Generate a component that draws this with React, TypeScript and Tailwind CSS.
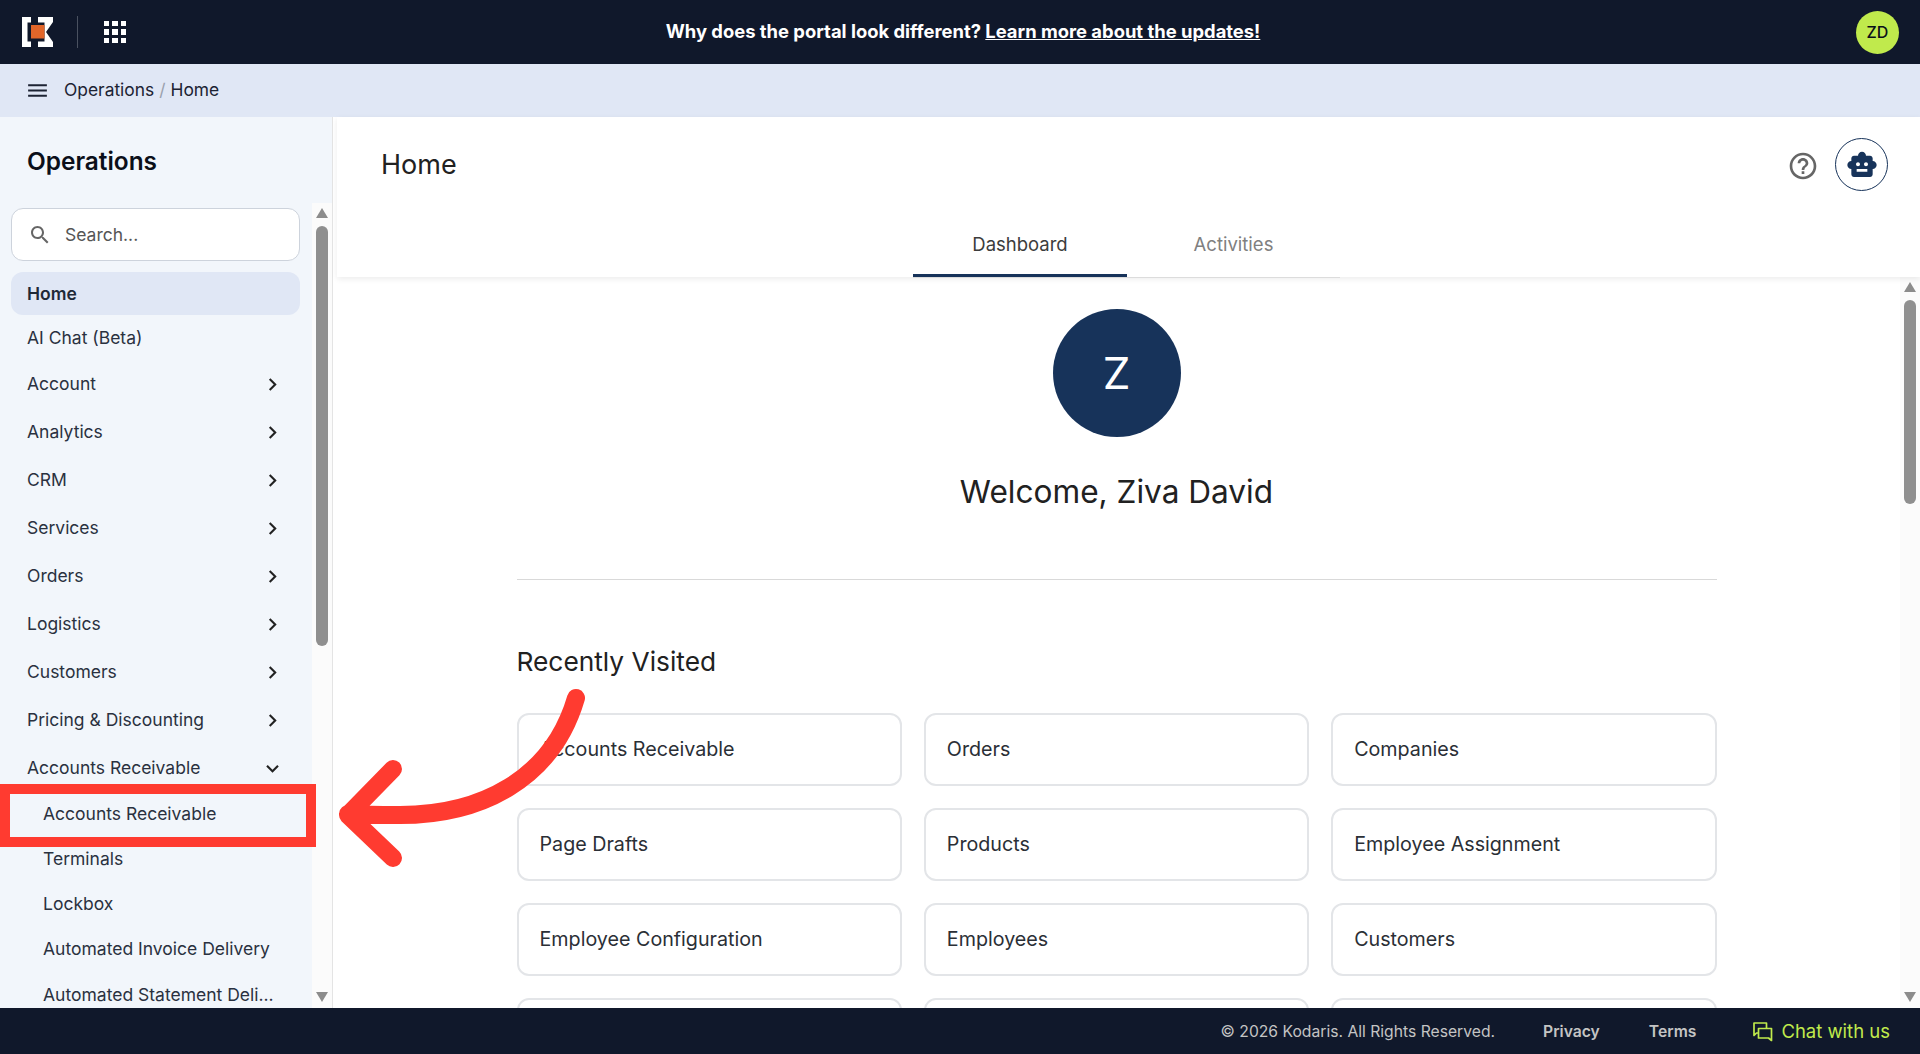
import React from "react";

const menuPath = "M3 18h18v-2H3v2zm0-5h18v-2H3v2zm0-7v2h18V6H3z";
const searchPath =
  "M15.5 14h-.79l-.28-.27C15.41 12.59 16 11.11 16 9.5 16 5.91 13.09 3 9.5 3S3 5.91 3 9.5 5.91 16 9.5 16c1.61 0 3.09-.59 4.23-1.57l.27.28v.79l5 4.99L20.49 19l-4.99-5zm-6 0C7.01 14 5 11.99 5 9.5S7.01 5 9.5 5 14 7.01 14 9.5 11.99 14 9.5 14z";
const chevronRightPath = "M10 6 8.59 7.41 13.17 12l-4.58 4.59L10 18l6-6z";
const chevronDownPath = "M16.59 8.59 12 13.17 7.41 8.59 6 10l6 6 6-6z";
const helpPath =
  "M11 18h2v-2h-2v2zm1-16C6.48 2 2 6.48 2 12s4.48 10 10 10 10-4.48 10-10S17.52 2 12 2zm0 18c-4.41 0-8-3.59-8-8s3.59-8 8-8 8 3.59 8 8-3.59 8-8 8zm0-14c-2.21 0-4 1.79-4 4h2c0-1.1.9-2 2-2s2 .9 2 2c0 2-3 1.75-3 5h2c0-2.25 3-2.5 3-5 0-2.21-1.79-4-4-4z";
const botPath =
  "M20 9V7c0-1.1-.9-2-2-2h-3c0-1.66-1.34-3-3-3S9 3.34 9 5H6c-1.1 0-2 .9-2 2v2c-1.66 0-3 1.34-3 3s1.34 3 3 3v4c0 1.1.9 2 2 2h12c1.1 0 2-.9 2-2v-4c1.66 0 3-1.34 3-3s-1.34-3-3-3zM7.5 11.5c0-.83.67-1.5 1.5-1.5s1.5.67 1.5 1.5S9.83 13 9 13s-1.5-.67-1.5-1.5zM16 17H8v-2h8v2zm-1-4c-.83 0-1.5-.67-1.5-1.5S14.17 10 15 10s1.5.67 1.5 1.5S15.83 13 15 13z";

const navItems = ["Account", "Analytics", "CRM", "Services", "Orders", "Logistics", "Customers", "Pricing & Discounting"];
const subItems = ["Accounts Receivable", "Terminals", "Lockbox", "Automated Invoice Delivery", "Automated Statement Deli..."];
const recentItems = [
  "Accounts Receivable",
  "Orders",
  "Companies",
  "Page Drafts",
  "Products",
  "Employee Assignment",
  "Employee Configuration",
  "Employees",
  "Customers",
  "",
  "",
  "",
];

function Icon({ d, className }: { d: string; className?: string }) {
  return (
    <svg viewBox="0 0 24 24" fill="currentColor" className={className}>
      <path d={d} />
    </svg>
  );
}

function Logo() {
  return (
    <svg viewBox="0 0 31 30" className="w-[31px] h-[30px]">
      <path d="M0 0H9V5.500H5.500V24.500H9V30H0Z" fill="#fff" />
      <path d="M16 0H31V5L24 15L31 25V30H16V24.500H22.500V5.500H16Z" fill="#fff" />
      <rect x="9" y="8" width="13.500" height="13.500" fill="#e2662a" />
    </svg>
  );
}

function GridIcon() {
  return (
    <div className="grid grid-cols-3 gap-[3px] w-[22px]">
      {Array.from({ length: 9 }).map((_, i) => (
        <div key={i} className="w-[5.33px] h-[5.33px] bg-white" />
      ))}
    </div>
  );
}

function ScrollBar({ thumbClass }: { thumbClass: string }) {
  return (
    <div className="w-5 shrink-0 flex flex-col items-center bg-[#fbfbfb]">
      <svg viewBox="0 0 12 10" className="w-3 h-2.5 mt-[5px] shrink-0" fill="#8c8c8c">
        <path d="M6 0 12 10H0Z" />
      </svg>
      <div className={`w-3 rounded-md bg-[#8f8f8f] shrink-0 ${thumbClass}`} />
      <svg viewBox="0 0 12 10" className="w-3 h-2.5 mt-auto mb-[6px] shrink-0" fill="#8c8c8c">
        <path d="M6 10 12 0H0Z" />
      </svg>
    </div>
  );
}

function Sidebar() {
  return (
    <aside className="w-[333px] shrink-0 flex flex-col bg-[#f2f6fb] border-r border-[#e4e4e4] overflow-hidden">
      <h2 className="h-[86px] shrink-0 pl-[27px] pt-[28px] text-[24.4px] leading-8 font-semibold text-[#0b0f19]">Operations</h2>
      <div className="flex-1 min-h-0 flex">
        <nav className="flex-1 min-w-0 overflow-hidden pt-[5px] text-[17.5px] text-[#2a3140]">
          <div className="mx-[11px] w-[289px] h-[53px] flex items-center rounded-xl bg-white border border-[#cdd3dc] text-[#555]">
            <Icon d={searchPath} className="w-6 h-6 ml-4 text-[#666]" />
            <span className="ml-[13px] pt-[2px]">Search...</span>
          </div>
          <div className="mx-[11px] mt-[11px] w-[289px] h-[43px] flex items-center pl-4 pt-px rounded-xl bg-[#e0e7f5] font-semibold text-[#1f2937]">
            Home
          </div>
          <div className="h-[45px] flex items-center pl-[27px] pt-[2px]">AI Chat (Beta)</div>
          {navItems.map((item) => (
            <div key={item} className="h-12 flex items-center justify-between pl-[27px] pr-[27px] pt-px">
              {item}
              <Icon d={chevronRightPath} className="w-[25px] h-[25px] text-[#222]" />
            </div>
          ))}
          <div className="h-12 flex items-center justify-between pl-[27px] pr-[27px] pt-px">
            Accounts Receivable
            <Icon d={chevronDownPath} className="w-[25px] h-[25px] text-[#222]" />
          </div>
          <div className="-mt-px">
            {subItems.map((item) => (
              <div key={item} className="h-[45.3px] flex items-center pl-[43px] whitespace-nowrap">
                {item}
              </div>
            ))}
          </div>
        </nav>
        <ScrollBar thumbClass="h-[420px] mt-[8px]" />
      </div>
    </aside>
  );
}

function MainPanel() {
  return (
    <main className="flex-1 min-w-0 flex flex-col bg-white">
      <header className="h-[160px] shrink-0 shadow-[0_2px_6px_rgba(0,0,0,0.08)] z-10 ml-1">
        <div className="flex items-center justify-between pt-[21px] pl-[44px] pr-[32px]">
          <h1 className="text-[27px] pt-[2px] text-[#212121]">Home</h1>
          <div className="flex items-center gap-[16px]">
            <Icon d={helpPath} className="w-8 h-8 mt-[2px] text-[#666]" />
            <div className="w-[53px] h-[53px] rounded-full border border-[#17335a] flex items-center justify-center text-[#17335a]">
              <Icon d={botPath} className="w-8 h-8" />
            </div>
          </div>
        </div>
        <div className="flex justify-center mt-[26px] -translate-x-[2px]">
          <div className="flex border-b border-[#dcdcdc] text-[18.5px] h-[61px]">
            <div className="w-[214px] h-[60px] flex items-center justify-center border-b-[3px] border-[#17335a] pb-[2px] text-[#3c3c3c]">
              Dashboard
            </div>
            <div className="w-[213px] h-[60px] flex items-center justify-center border-b-[3px] border-transparent pb-[2px] text-[#808080]">
              Activities
            </div>
          </div>
        </div>
      </header>
      <div className="flex-1 min-h-0 flex">
        <div className="flex-1 min-w-0 overflow-hidden pt-8">
          <div className="w-[1200px] mx-auto">
            <div className="w-32 h-32 mx-auto rounded-full bg-[#17335a] flex items-center justify-center text-white text-[44px]">
              Z
            </div>
            <p className="mt-[35px] text-center text-[31.6px] leading-10 text-[#212121]">Welcome, Ziva David</p>
            <hr className="mt-[67px] border-[#d9d9d9]" />
            <h3 className="mt-[66px] text-[26.3px] leading-8 text-[#212121]">Recently Visited</h3>
            <div className="mt-[35px] grid grid-cols-3 gap-x-[22px] gap-y-[22px]">
              {recentItems.map((item, i) => (
                <div
                  key={i}
                  className="h-[73px] flex items-center px-[21px] rounded-xl border-2 border-[#e3e5e8] text-[19.7px] text-[#2b2f36]"
                >
                  {item}
                </div>
              ))}
            </div>
          </div>
        </div>
        <ScrollBar thumbClass="h-[204px] mt-[8px]" />
      </div>
    </main>
  );
}

export default function App() {
  return (
    <div className="relative h-screen flex flex-col overflow-hidden font-['Inter',sans-serif]">
      <div className="h-16 shrink-0 flex items-center bg-[#10182b]">
        <div className="w-[150px] flex items-center pl-[22px]">
          <Logo />
          <div className="w-px h-8 ml-[24px] mr-[26px] bg-[#4a5160]" />
          <GridIcon />
        </div>
        <p className="flex-1 text-center text-[18.4px] font-bold text-white">
          Why does the portal look different? <span className="underline">Learn more about the updates!</span>
        </p>
        <div className="w-[144px] flex justify-end pr-[21px]">
          <div className="w-[43px] h-[43px] rounded-full bg-[#c0ea4c] flex items-center justify-center text-base font-medium text-[#0b0f19]">
            ZD
          </div>
        </div>
      </div>

      <div className="h-[53px] shrink-0 flex items-center pl-[25px] bg-[#e0e7f5] text-[17.4px] text-[#1c2333]">
        <Icon d={menuPath} className="w-[25px] h-[25px]" />
        <span className="ml-[14px]">Operations</span>
        <span className="mx-[5px] text-[#9aa1ad]">/</span>
        <span>Home</span>
      </div>

      <div className="flex-1 min-h-0 flex">
        <Sidebar />
        <MainPanel />
      </div>

      <footer className="h-[46px] shrink-0 flex items-center justify-end pr-[30px] pt-[2px] bg-[#10182b] text-[15.7px] text-[#c4c4c4]">
        <span>© 2026 Kodaris. All Rights Reserved.</span>
        <span className="ml-[48px] font-semibold">Privacy</span>
        <span className="ml-[49px] font-semibold">Terms</span>
        <svg viewBox="0 0 20 20" fill="none" stroke="#c0ea4c" strokeWidth="1.7" strokeLinejoin="round" className="ml-[57px] w-5 h-5">
          <path d="M5 11H3.500L1 13.500V1H13.500V6.500" />
          <path d="M5.500 6.500H18.500V18.500L15.500 16H5.500Z" />
        </svg>
        <span className="ml-2 text-[18.5px] text-[#c0ea4c]">Chat with us</span>
      </footer>

      {/* Annotation: red box and arrow over the page */}
      <div className="absolute left-0 top-[784px] w-[316px] h-[63px] border-[10px] border-[#ff3b30]" />
      <svg className="absolute left-0 top-0 w-[1920px] h-[1054px] pointer-events-none" viewBox="0 0 1920 1054" fill="none">
        <path
          d="M576 698C552 780 480 815 400 815C380 815 365 815 348 814M393 769L348 815L393 858"
          stroke="#ff3b30"
          strokeWidth="18"
          strokeLinecap="round"
          strokeLinejoin="round"
        />
      </svg>
    </div>
  );
}
